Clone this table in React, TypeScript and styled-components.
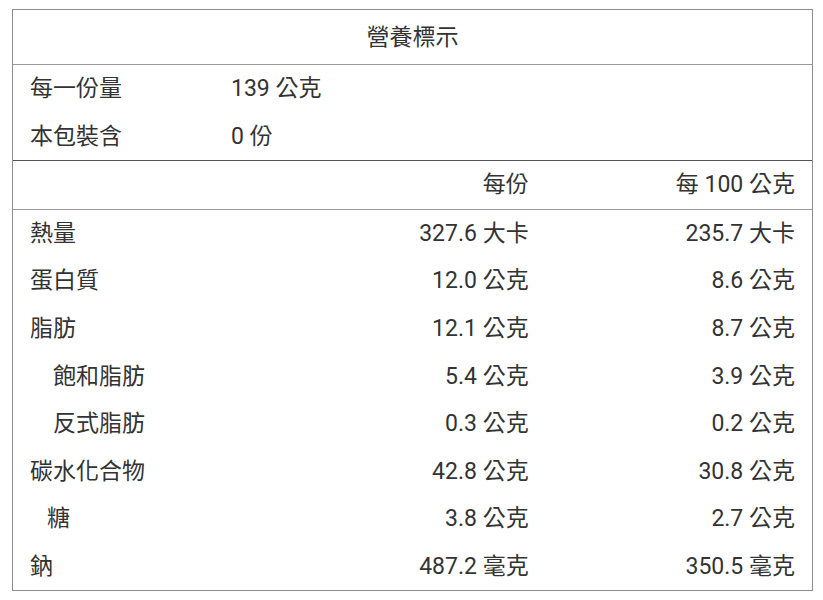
import React from 'react';
import styled, { createGlobalStyle } from 'styled-components';

const GlobalStyle = createGlobalStyle`
  body {
    margin: 0;
    background: #ffffff;
    font-family: Roboto, "Noto Sans CJK TC", sans-serif;
    color: #333333;
  }
`;

const Page = styled.div`
  padding: 9px 10px 9px 12px;
`;

const Table = styled.section`
  width: 801px;
  box-sizing: border-box;
  border: 1px solid #8c8c8c;
  font-size: 23px;
`;

const Title = styled.h1`
  margin: 0;
  height: 55px;
  box-sizing: border-box;
  padding-bottom: 5px;
  display: flex;
  align-items: center;
  justify-content: center;
  font-size: 23px;
  font-weight: 400;
  border-bottom: 1px solid #9a9a9a;
`;

const Serving = styled.div`
  border-bottom: 1px solid #555555;
`;

const ServingRow = styled.div`
  display: grid;
  grid-template-columns: 201px 1fr;
  height: 47.5px;
  align-items: center;
  padding: 0 0 5px 17px;
  box-sizing: border-box;
`;

const Grid = styled.div<{ $divider?: boolean }>`
  border-bottom: ${({ $divider }) => ($divider ? '1px solid #9a9a9a' : 'none')};
`;

const Row = styled.div`
  display: grid;
  grid-template-columns: repeat(3, 1fr);
  height: 47.6px;
  box-sizing: border-box;
  padding-bottom: 5px;
  align-items: center;
`;

const Label = styled.span<{ $indent?: number }>`
  padding-left: ${({ $indent = 0 }) => 17 + $indent}px;
`;

const Value = styled.span`
  text-align: right;
  padding-right: 17px;
  white-space: nowrap;
`;

const nutrients: { name: string; indent?: number; serving: string; per100: string }[] = [
  { name: '熱量', serving: '327.6 大卡', per100: '235.7 大卡' },
  { name: '蛋白質', serving: '12.0 公克', per100: '8.6 公克' },
  { name: '脂肪', serving: '12.1 公克', per100: '8.7 公克' },
  { name: '飽和脂肪', indent: 23, serving: '5.4 公克', per100: '3.9 公克' },
  { name: '反式脂肪', indent: 23, serving: '0.3 公克', per100: '0.2 公克' },
  { name: '碳水化合物', serving: '42.8 公克', per100: '30.8 公克' },
  { name: '糖', indent: 17, serving: '3.8 公克', per100: '2.7 公克' },
  { name: '鈉', serving: '487.2 毫克', per100: '350.5 毫克' },
];

const App: React.FC = () => {
  return (
    <Page>
      <GlobalStyle />
      <Table>
        <Title>營養標示</Title>
        <Serving>
          <ServingRow>
            <span>每一份量</span>
            <span>139 公克</span>
          </ServingRow>
          <ServingRow>
            <span>本包裝含</span>
            <span>0 份</span>
          </ServingRow>
        </Serving>
        <Grid $divider>
          <Row>
            <Label />
            <Value>每份</Value>
            <Value>每 100 公克</Value>
          </Row>
        </Grid>
        <Grid>
          {nutrients.map((n) => (
            <Row key={n.name}>
              <Label $indent={n.indent}>{n.name}</Label>
              <Value>{n.serving}</Value>
              <Value>{n.per100}</Value>
            </Row>
          ))}
        </Grid>
      </Table>
    </Page>
  );
};

export default App;
